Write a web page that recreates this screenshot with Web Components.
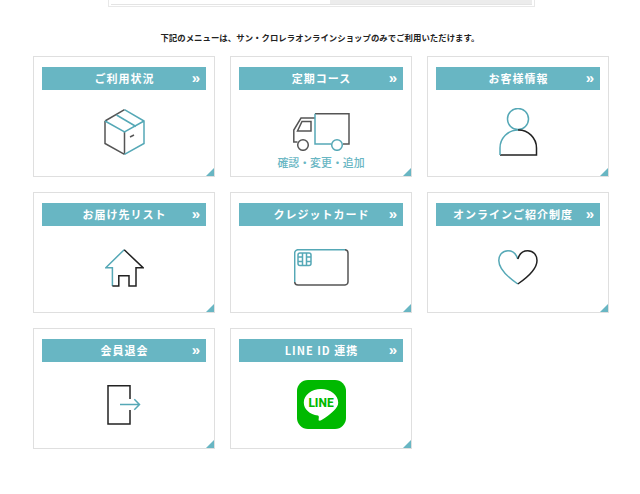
<!DOCTYPE html>
<html lang="ja">
<head>
<meta charset="utf-8">
<title>メニュー</title>
<style>
  html, body { margin: 0; background: #fff; }
  body { font-family: "Noto Sans CJK JP", "Noto Sans", sans-serif; overflow: hidden; }
  svg { display: block; fill: none; stroke-width: 1.5; }
  .teal { stroke: #55a8b6; }
  .dark { stroke: #222; }
  .grey { stroke: #555; }
</style>
</head>
<body>
<top-strip></top-strip>
<menu-notice>下記のメニューは、サン・クロレラオンラインショップのみでご利用いただけます。</menu-notice>
<menu-grid>
  <menu-card label="ご利用状況">
    <svg style="margin-top:19px" width="41" height="46" viewBox="0 0 41 46">
      <path class="grey" d="M1 12 20.5 .7M1 12V34.5L20.5 45.3M20.5 23V45.3"/>
      <path class="teal" d="M20.5 .7 40 12V34.5L20.5 45.3M1 12 20.5 23 40 12M12.5 6 32 17.5"/>
      <path class="grey" d="M26 28 30 26"/>
    </svg>
  </menu-card>
  <menu-card label="定期コース">
    <svg style="margin-top:23px" width="57" height="38" viewBox="0 0 57 38">
      <path class="grey" d="M22 .7H56V31H50M22 5H8L.8 17V29H4.5"/>
      <path class="teal" d="M22 .7V31H38.5"/>
      <path class="grey" d="M9 8.5H18V18H4.5Z"/>
      <circle class="grey" cx="10" cy="32" r="5.3" fill="#fff"/>
      <circle class="teal" cx="44" cy="32" r="5.3" fill="#fff"/>
    </svg>
    <span slot="note">確認・変更・追加</span>
  </menu-card>
  <menu-card label="お客様情報">
    <svg style="margin-top:18px" width="39" height="48" viewBox="0 0 39 48">
      <circle class="teal" cx="19" cy="11" r="10.5"/>
      <path class="dark" d="M19 22A18 18 0 0 1 37.5 40V47H1"/>
      <path class="teal" d="M1 47V40A18 18 0 0 1 19 22"/>
    </svg>
  </menu-card>
  <menu-card label="お届け先リスト">
    <svg style="margin-top:23px" width="39" height="38" viewBox="0 0 39 38">
      <path class="teal" d="M19.2 .7 .8 18.7H7.4V37"/>
      <path class="dark" d="M7.4 37H13.8V26.7H24V37H31V18.7H38L19.2 .7"/>
    </svg>
  </menu-card>
  <menu-card label="クレジットカード">
    <svg style="margin-top:23px" width="55" height="37" viewBox="0 0 55 37">
      <path class="teal" d="M.7 33V4A3.3 3.3 0 0 1 4 .7H51"/>
      <path class="grey" d="M51 .7A3.3 3.3 0 0 1 54 4V33A3.3 3.3 0 0 1 51 36H4A3.3 3.3 0 0 1 .7 33"/>
      <rect class="teal" x="4" y="4" width="13" height="12.5" rx="2"/>
      <path class="teal" d="M4 8H8.5M4 12.5H8.5M8.5 4V16.5M12.5 4V16.5M12.5 8H17M12.5 12.5H17"/>
    </svg>
  </menu-card>
  <menu-card label="オンラインご紹介制度" style="--label-gap:11px">
    <svg style="margin-top:24px" width="40" height="35" viewBox="0 0 40 35">
      <path class="teal" d="M19.8 9C18 3.5 14 .8 10 .8 4.5 .8 .8 5 .8 10.5.8 20 11 28 19.8 34"/>
      <path class="dark" d="M19.8 9C21.5 3.5 25.5 .8 29.8 .8 35.3 .8 39 5 39 10.5 39 20 28.6 28 19.8 34"/>
    </svg>
  </menu-card>
  <menu-card label="会員退会">
    <svg style="margin-top:23px" width="34" height="40" viewBox="0 0 34 40">
      <path class="dark" d="M23 14V.7H1V39H23V25"/>
      <path class="teal" d="M13 19.5H32.5M27.3 14.3 32.5 19.5 27.3 24.7"/>
    </svg>
  </menu-card>
  <menu-card label="LINE ID 連携">
    <svg style="margin-top:18px" width="49" height="49" viewBox="0 0 49 49">
      <rect width="49" height="49" rx="11" fill="#00b900"/>
      <path fill="#fff" d="M24 9C14.5 9 6.8 15 6.8 22.5 6.8 29 12.5 34.5 21 35.6 22 36 22 37 21.6 39.5 21.5 41 23 41 24.5 40 29 37.5 33 34.5 37 30.5 39.7 27.8 41.2 25.5 41.2 22.5 41.2 15 33.5 9 24 9Z"/>
      <text x="24" y="27" text-anchor="middle" font-size="12" font-weight="800" fill="#00b900" font-family="Roboto, sans-serif">LINE</text>
    </svg>
  </menu-card>
</menu-grid>
<script>
// strip left over from the panel above the menu
class TopStrip extends HTMLElement {
  constructor() {
    super();
    this.attachShadow({ mode: 'open' });
    this.shadowRoot.innerHTML = `
      <style>
        :host { display: block; box-sizing: border-box; width: 427px; height: 7px; margin-left: 108px;
                border: 1px solid #e8e8e8; border-top: 0; padding: 0 2px 2px; }
        .inner { display: flex; height: 100%; border-bottom: 1px solid #e4e4e4; }
        .left { width: 219px; }
        .right { flex: 1; background: #ececec; }
      </style>
      <div class="inner"><div class="left"></div><div class="right"></div></div>`;
  }
}

class MenuNotice extends HTMLElement {
  constructor() {
    super();
    this.attachShadow({ mode: 'open' });
    this.shadowRoot.innerHTML = `
      <style>
        :host { display: block; height: 49px; padding: 24px 0 0 0; box-sizing: border-box; text-align: center;
                font-size: 8.37px; letter-spacing: .06px; line-height: 12px; font-weight: 700; color: #222;
                white-space: nowrap; }
      </style>
      <slot></slot>`;
  }
}

class MenuGrid extends HTMLElement {
  constructor() {
    super();
    this.attachShadow({ mode: 'open' });
    this.shadowRoot.innerHTML = `
      <style>
        :host { display: grid; grid-template-columns: repeat(3, 182px); grid-auto-rows: 121px; gap: 15px;
                padding-left: 33px; }
      </style>
      <slot></slot>`;
  }
}

class MenuCard extends HTMLElement {
  constructor() {
    super();
    const template = document.createElement('template');
    template.innerHTML = `
      <style>
        :host { display: flex; flex-direction: column; align-items: center; position: relative;
                box-sizing: border-box; border: 1px solid #dfdfdf; padding: 10px 8px 0; }
        .head { display: grid; grid-template-columns: 1fr auto 1fr; align-items: center; align-self: stretch;
                box-sizing: border-box; height: 23px; background: #68b6c3; color: #fff; font-size: 11px; font-weight: 700;
                letter-spacing: 1px; padding: 0 6px 1px 7px; white-space: nowrap; }
        .label { grid-column: 2; margin-right: var(--label-gap, 0); }
        .more { grid-column: 3; justify-self: end; font-size: 15px; line-height: 1; font-weight: 700;
                letter-spacing: 0; font-family: "Liberation Sans", sans-serif; margin-top: -1px; }
        .note { margin-top: 5px; font-size: 10.9px; line-height: 13px; font-weight: 500; color: #68b6c3; }
        .corner { position: absolute; right: 0; bottom: 0; width: 0; height: 0;
                  border-left: 8px solid transparent; border-bottom: 8px solid #68b6c3; }
      </style>
      <div class="head"><span class="label"></span><span class="more">»</span></div>
      <slot></slot>
      <div class="note"><slot name="note"></slot></div>
      <i class="corner"></i>`;
    this.attachShadow({ mode: 'open' });
    this.shadowRoot.appendChild(template.content.cloneNode(true));
    this.shadowRoot.querySelector('.label').textContent = this.getAttribute('label');
  }
}

customElements.define('top-strip', TopStrip);
customElements.define('menu-notice', MenuNotice);
customElements.define('menu-grid', MenuGrid);
customElements.define('menu-card', MenuCard);
</script>
</body>
</html>
